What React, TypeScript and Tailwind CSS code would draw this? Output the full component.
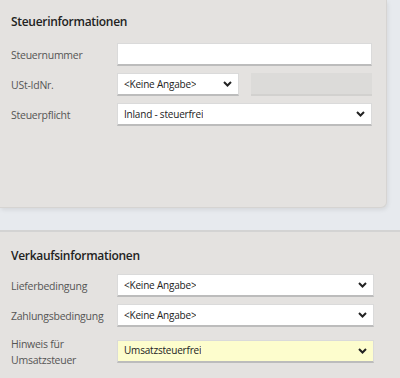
import React from "react";

const font = { fontFamily: '"Segoe UI", "Open Sans", "Noto Sans", sans-serif' };

function Chevron() {
  return (
    <svg width="9" height="6" viewBox="0 0 9 6" className="shrink-0">
      <polyline points="1,1 4.5,4.5 8,1" fill="none" stroke="#222" strokeWidth="2" />
    </svg>
  );
}

function Field({ value, select, yellow, className = "" }: { value?: string; select?: boolean; yellow?: boolean; className?: string }) {
  return (
    <div
      className={`h-[23px] flex items-center justify-between pl-[6px] pr-[6px] border border-[#dadada] border-b-[#bcbcbc] border-b-2 text-[10px] tracking-[-0.2px] text-[#222] ${
        yellow ? "bg-[#fdfdcd]" : "bg-white"
      } ${className}`}
    >
      <span className="truncate">{value}</span>
      {select && <Chevron />}
    </div>
  );
}

function Row({ label, children }: { label: React.ReactNode; children: React.ReactNode }) {
  return (
    <div className="flex items-center">
      <div className="w-[106px] shrink-0 text-[10.5px] tracking-[-0.25px] leading-[16px] text-[#555]">{label}</div>
      <div className="flex-1 flex gap-3">{children}</div>
    </div>
  );
}

export default function App() {
  return (
    <div className="w-[400px] h-[378px] bg-[#e7eaee] overflow-hidden flex flex-col" style={font}>
      {/* Steuerinformationen */}
      <div className="w-[387px] h-[208px] shrink-0 bg-[#e4e2e0] border-r border-b border-[#d6d4d2] rounded-br-md shadow-[1px_2px_4px_rgba(0,0,0,0.08)] pl-[11px] pr-[14px] pt-[12px]">
        <h2 className="text-[12px] tracking-[-0.3px] font-semibold text-[#222] leading-[20px] mb-[11px]">Steuerinformationen</h2>
        <div className="flex flex-col gap-[7px]">
          <Row label="Steuernummer">
            <Field className="flex-1" />
          </Row>
          <Row label="USt-IdNr.">
            <Field className="w-[122px]" value="<Keine Angabe>" select />
            <div className="flex-1 h-[23px] bg-[#dcdbd9] border-b-2 border-[#d2d1cf]" />
          </Row>
          <Row label="Steuerpflicht">
            <Field className="flex-1" value="Inland - steuerfrei" select />
          </Row>
        </div>
      </div>

      {/* Verkaufsinformationen */}
      <div className="mt-[22px] flex-1 bg-[#e4e2e0] border-t-2 border-[#d3d3d3] pl-[11px] pr-[26px] pt-[14px]">
        <h2 className="text-[12px] tracking-[-0.3px] font-semibold text-[#222] leading-[20px] mb-[8px]">Verkaufsinformationen</h2>
        <div className="flex flex-col gap-[7px]">
          <Row label="Lieferbedingung">
            <Field className="flex-1" value="<Keine Angabe>" select />
          </Row>
          <Row label="Zahlungsbedingung">
            <Field className="flex-1" value="<Keine Angabe>" select />
          </Row>
          <Row
            label={
              <span className="block leading-[16px] pt-[2px]">
                Hinweis für
                <br />
                Umsatzsteuer
              </span>
            }
          >
            <Field className="flex-1 self-start" value="Umsatzsteuerfrei" select yellow />
          </Row>
        </div>
      </div>
    </div>
  );
}
